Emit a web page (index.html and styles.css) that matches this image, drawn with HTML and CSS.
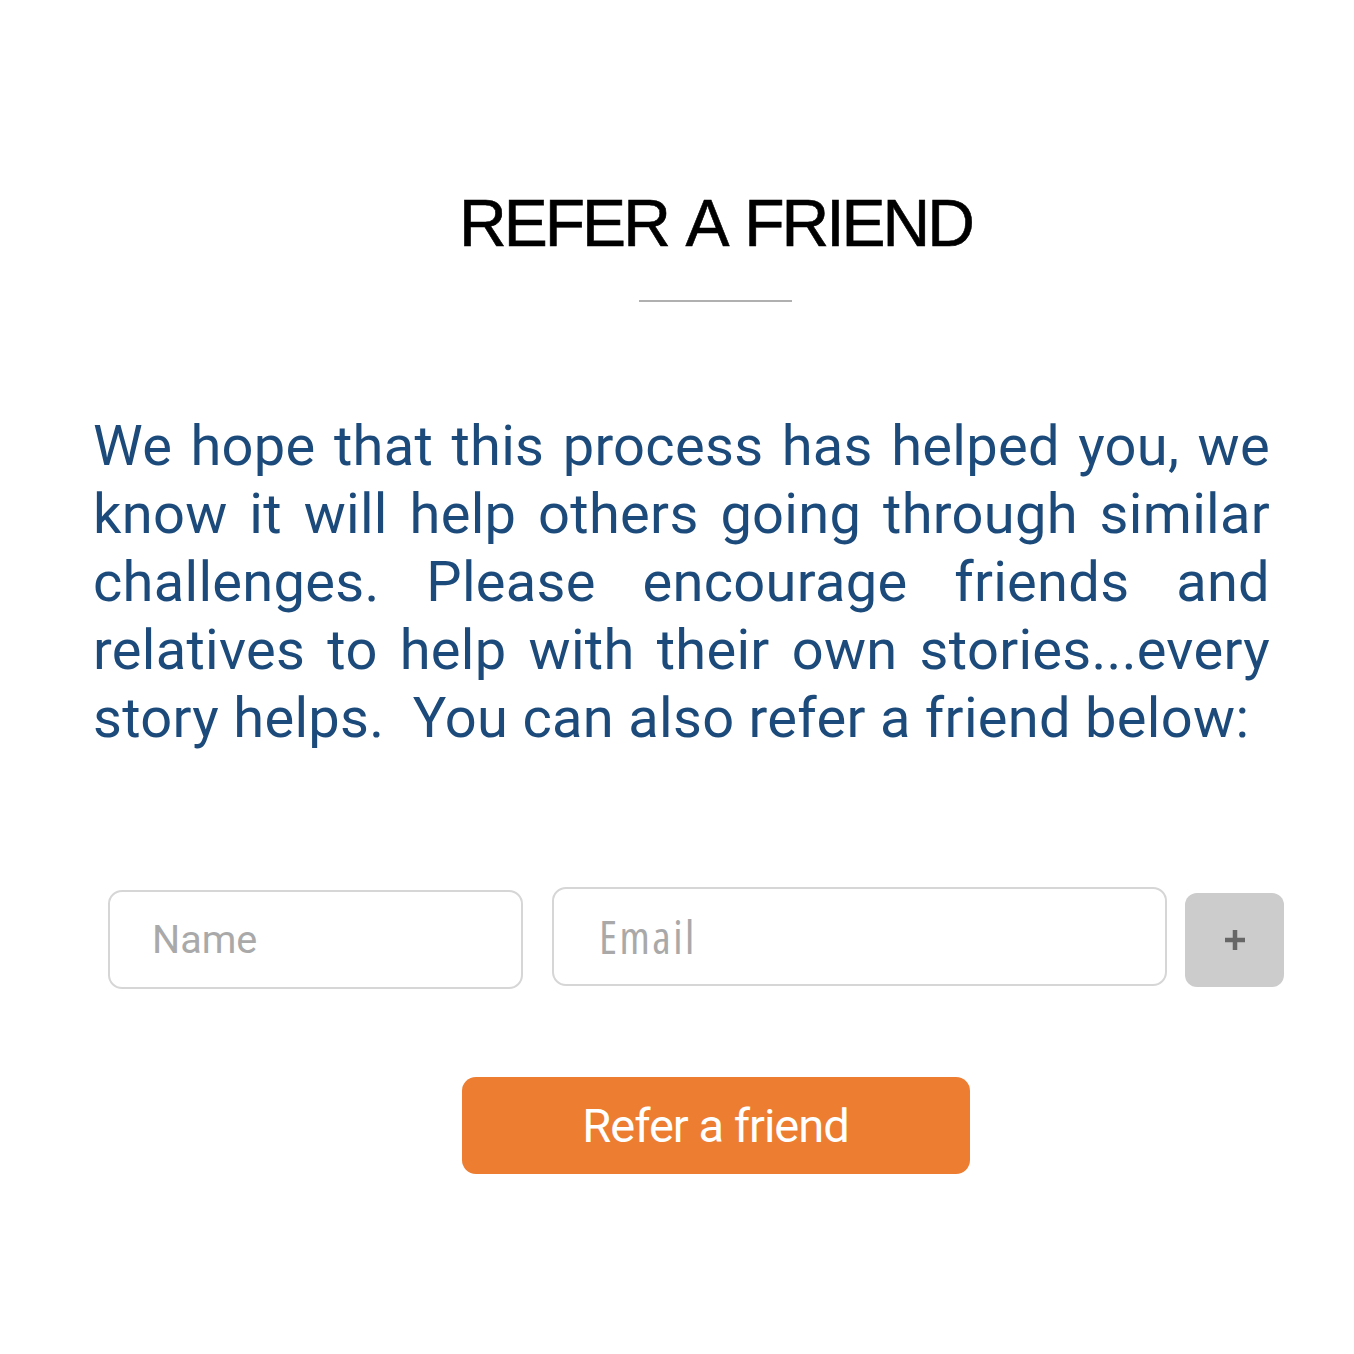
FILE: index.html
```html
<!DOCTYPE html>
<html lang="en">
<head>
<meta charset="utf-8">
<title>Refer a friend</title>
<link rel="stylesheet" href="styles.css">
</head>
<body>
<main class="page">
  <h1 class="title">REFER A FRIEND</h1>
  <hr class="divider">
  <p class="intro">We hope that this process has helped you, we know it will help others going through similar challenges. Please encourage friends and relatives to help with their own stories...every story helps.&nbsp; You can also refer a friend below:</p>
  <form class="refer-form">
    <div class="fields">
      <input class="field field-name" type="text" placeholder="Name">
      <input class="field field-email" type="email" placeholder="Email">
      <button class="add-btn" type="button" aria-label="Add another">
        <svg width="22" height="22" viewBox="0 0 22 22"><path d="M11 1v20M1 11h20" stroke="#666" stroke-width="4.5" fill="none"/></svg>
      </button>
    </div>
    <button class="submit-btn" type="button">Refer a friend</button>
  </form>
</main>
</body>
</html>
```

FILE: styles.css
```css
html, body {
  margin: 0;
  padding: 0;
  background: #ffffff;
}

.page {
  padding: 185px 16px 0 93px;
  display: flex;
  flex-direction: column;
  align-items: center;
}

.title {
  margin: 0;
  font-family: "Liberation Sans", Arial, sans-serif;
  font-weight: 400;
  font-size: 66px;
  line-height: 76px;
  letter-spacing: -3px;
  word-spacing: 6px;
  color: #000;
  -webkit-text-stroke: 0.6px #000;
}

.divider {
  margin: 39px 0 0 0;
  width: 153px;
  height: 2px;
  border: 0;
  background: #b0b0b0;
}

.intro {
  align-self: stretch;
  margin: 110px 68px 0 0;
  font-family: Roboto, "Liberation Sans", sans-serif;
  font-size: 56px;
  line-height: 68px;
  letter-spacing: 0.3px;
  color: #1c4b7b;
  text-align: justify;
}

.refer-form {
  align-self: stretch;
  display: flex;
  flex-direction: column;
  align-items: center;
  margin-top: 134px;
}

.fields {
  align-self: stretch;
  margin-left: 15px;
  display: flex;
  align-items: center;
}

.field {
  box-sizing: border-box;
  height: 99px;
  border: 2px solid #d6d6d6;
  border-radius: 14px;
  background: #fff;
  padding: 0 0 0 42px;
  font-family: Roboto, "Liberation Sans", sans-serif;
  font-size: 39.5px;
  color: #333;
  outline: none;
}

.field::placeholder {
  color: #a9a9a9;
}

.field-name {
  width: 415px;
  margin-top: 4px;
}

.field-email {
  width: 615px;
  margin-left: 29px;
  margin-bottom: 2px;
  padding-left: 45px;
  font-family: "Open Sans", Roboto, sans-serif;
  font-size: 45px;
  font-stretch: 84%;
  letter-spacing: 2.5px;
}

.add-btn {
  width: 99px;
  height: 94px;
  margin-left: 18px;
  margin-top: 4px;
  border: 0;
  border-radius: 12px;
  background: #cccccc;
  display: flex;
  align-items: center;
  justify-content: center;
  padding: 0;
}

.submit-btn {
  margin-top: 88px;
  width: 508px;
  height: 97px;
  border: 0;
  border-radius: 14px;
  background: #ec7d31;
  color: #fff;
  font-family: Roboto, "Liberation Sans", sans-serif;
  font-size: 47px;
  letter-spacing: -1px;
  padding: 0;
}
```
